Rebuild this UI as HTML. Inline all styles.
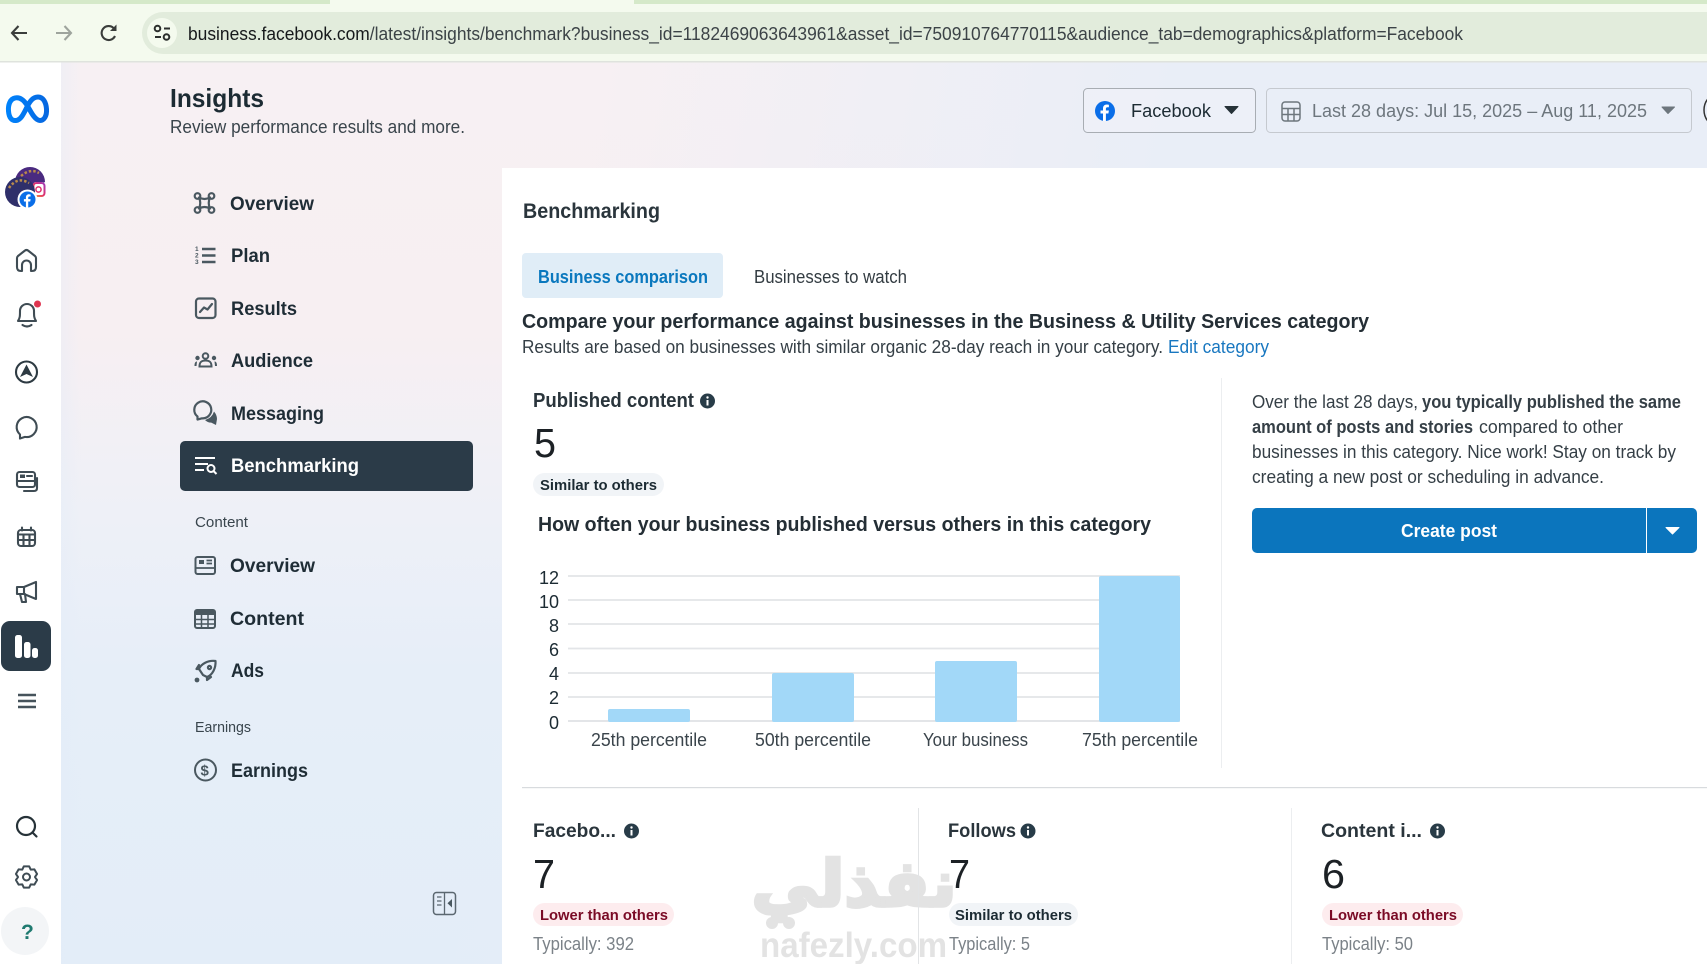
<!DOCTYPE html>
<html lang="en">
<head>
<meta charset="utf-8">
<title>Insights - Benchmarking</title>
<style>
html,body{margin:0;padding:0;width:1707px;height:964px;overflow:hidden;background:#fff}
#bg{position:absolute;left:61px;top:62px;width:1646px;height:902px;
background:
 linear-gradient(90deg,rgba(226,236,248,.35) 0,rgba(226,236,248,0) 20px),
 linear-gradient(100deg,rgba(233,238,247,0) 30%,rgba(233,238,247,1) 62%),
 linear-gradient(180deg,#f7f0f3 0,#f7eff2 30%,#eef0f7 50%,#e6eef8 68%,#e3edf8 100%)}
svg{position:absolute;left:0;top:0}
text{font-family:"Liberation Sans",sans-serif;fill:#1c2b33}
.b{font-weight:700}
.nav{font-weight:700;font-size:19px;fill:#1f2d36}
.lab{font-size:15px;fill:#39454d}
.i{fill:none;stroke:#4a5860;stroke-width:2.2;stroke-linecap:round;stroke-linejoin:round}
.s{fill:none;stroke:#3f4c54;stroke-width:2.1;stroke-linecap:round;stroke-linejoin:round}
.ax{font-size:18px;fill:#3a444b}
.pill{font-weight:700;font-size:15px}
.typ{font-size:18px;fill:#7b8288}
.num{font-size:41px;fill:#1c2125}
.body{font-size:18px;fill:#353f46}
</style>
</head>
<body>
<div id="bg"></div>
<svg width="1707" height="964" viewBox="0 0 1707 964" xmlns="http://www.w3.org/2000/svg">
<defs>
<linearGradient id="meta" x1="0" x2="1" y1="0" y2="0"><stop offset="0" stop-color="#0082fb"/><stop offset="1" stop-color="#0668e1"/></linearGradient>
<linearGradient id="ig" x1="0" x2="1" y1="1" y2="0"><stop offset="0" stop-color="#f9a03c"/><stop offset=".5" stop-color="#e1306c"/><stop offset="1" stop-color="#a13ab8"/></linearGradient>
</defs>

<!-- browser chrome -->
<rect x="0" y="0" width="1707" height="62" fill="#f4faee"/>
<rect x="0" y="0" width="330" height="4" fill="#d5e9c9"/>
<rect x="634" y="0" width="1073" height="4" fill="#d5e9c9"/>
<rect x="0" y="61" width="1707" height="1.5" fill="#dfe3dd"/>
<path d="M1707 12H163a21 21 0 0 0 0 42H1707Z" fill="#e2ecdc"/>
<circle cx="162" cy="33" r="15" fill="#f4faee"/>
<g fill="none" stroke="#2c2f2d" stroke-width="2">
<circle cx="157.500" cy="28.500" r="2.800"/><path d="M164 28.500H170"/><circle cx="166.500" cy="37" r="2.800"/><path d="M155 37H161"/>
</g>
<path d="M27 33H12M18.500 26L12 33L18.500 40" fill="none" stroke="#3a3d3b" stroke-width="2.100"/>
<path d="M56 33H71M64.500 26L71 33L64.500 40" fill="none" stroke="#9ea49d" stroke-width="2.100"/>
<path d="M115 36A7 7 0 1 1 113.500 28" fill="none" stroke="#3a3d3b" stroke-width="2.100"/>
<path d="M116.500 24.500V31H110Z" fill="#3a3d3b"/>
<text x="188" y="40" font-size="18.500" textLength="1275" lengthAdjust="spacingAndGlyphs" style="fill:#22282b"><tspan style="fill:#16191b">business.facebook.com</tspan><tspan style="fill:#3c4347">/latest/insights/benchmark?business_id=1182469063643961&amp;asset_id=750910764770115&amp;audience_tab=demographics&amp;platform=Facebook</tspan></text>

<!-- left rail -->
<path d="M27 105C23 99 19 97 15 98C10 99 8 105 8.500 111C9 118 12 121 16 120.500C21 120 24 113 27 107C30 101 33 97 38 97C43 97 46 102 46.500 109C47 116 44 120.500 40 120.500C35 120.500 31 112 27 105Z" fill="none" stroke="url(#meta)" stroke-width="5" stroke-linejoin="round"/>
<path d="M15 182A15 15 0 0 1 45 182L30 190Z" fill="#4a2a80"/>
<path d="M21 176Q30 168 39 173" fill="none" stroke="#b98a4a" stroke-width="2.500" stroke-dasharray="2.500 2"/>
<rect x="33" y="182" width="12" height="15" rx="3" fill="#fff"/>
<rect x="33.500" y="183" width="11" height="13" rx="3" fill="none" stroke="url(#ig)" stroke-width="2"/>
<circle cx="38.500" cy="189.500" r="2.600" fill="none" stroke="#e1306c" stroke-width="1.500"/>
<circle cx="20" cy="192" r="15" fill="#2f2f6a"/>
<path d="M9 188Q17 176 29 183" fill="none" stroke="#b98a4a" stroke-width="2.500" stroke-dasharray="2.500 2"/>
<circle cx="27.500" cy="199.500" r="10" fill="#fff"/>
<circle cx="27.500" cy="199.500" r="8" fill="#0a6ee8"/>
<path transform="translate(27.500 199.500) scale(.8)" d="M-2 10V2.500H-4.500V-.5H-2V-2.500C-2-5.100-.5-6.500 1.900-6.500L3.900-6.300V-3.700H2.500C1.300-3.700.9-3 .9-2.200V-.5H3.900L3.400 2.500H.9V10Z" fill="#fff"/>

<g class="s">
<path d="M17 258Q17 257 18 256L25 250.500Q26.500 249.500 28 250.500L35 256Q36 257 36 258V267Q36 271 32 271H31V265A4.500 4.500 0 0 0 22 265V271H21Q17 271 17 267Z"/>
<path d="M18 321C20 318 20 316 20 311A7 7 0 0 1 34 311C34 316 34 318 36 321Z"/><path d="M22.500 325Q27 328 31.500 325"/>
</g>
<circle cx="37.500" cy="304" r="3.500" fill="#df3550"/>
<circle cx="26.500" cy="372" r="10.500" fill="none" stroke="#2d3a42" stroke-width="2.100"/>
<path d="M26.500 364.500L33 377L26.500 374L20 377Z" fill="#2d3a42"/>
<path class="s" d="M20 434.500A10 10 0 1 1 25 436.900L20 438.500Z"/>
<g class="s">
<rect x="17" y="472" width="18" height="15" rx="2.500"/>
<path d="M37 478V488Q37 491 34 491H24"/>
<path d="M17 481H35"/><path d="M27 476H32"/>
</g>
<rect x="20" y="474.500" width="5" height="3.500" fill="#3f4c54"/>
<g class="s">
<rect x="18" y="530" width="17" height="16" rx="3"/><path d="M22 527.500V530.500M31 527.500V530.500M18 534.500H35M18 540H35M23.500 534.500V546M29.500 534.500V546"/>
</g>
<g class="s">
<path d="M17 587H24L36 582V599L24 594H17Z"/><path d="M20 594L22 602H26L25 594"/><path d="M24 587V594"/>
</g>
<rect x="1" y="621" width="50" height="50" rx="9" fill="#2b3b48"/>
<rect x="15" y="635" width="7" height="23" rx="2.500" fill="#fff"/>
<rect x="24" y="642" width="6.500" height="16" rx="2.500" fill="#fff"/>
<rect x="32" y="648" width="6" height="10" rx="2.500" fill="#fff"/>
<path d="M18 695H36M18 701H36M18 707H36" fill="none" stroke="#46535b" stroke-width="2.400"/>
<circle cx="26" cy="826" r="9" fill="none" stroke="#263238" stroke-width="2.200"/>
<path d="M32.500 832.500L36.500 836.500" stroke="#263238" stroke-width="2.200" stroke-linecap="round"/>
<circle cx="26.500" cy="877" r="3.500" fill="none" stroke="#3f4c54" stroke-width="2"/>
<path transform="translate(26.500 877)" d="M-2.660-10.670L2.660-10.670L4.250-7.360L7.900-7.640L10.570-3.030L8.500 0L10.570 3.030L7.900 7.640L4.250 7.360L2.660 10.670L-2.660 10.670L-4.250 7.360L-7.900 7.640L-10.570 3.030L-8.500 0L-10.570-3.030L-7.900-7.640L-4.250-7.360Z" fill="none" stroke="#3f4c54" stroke-width="2" stroke-linejoin="round"/>
<circle cx="25" cy="931" r="24" fill="#f3f5f7"/>
<text x="21" y="939" font-size="21" class="b" style="fill:#1f7a70">?</text>

<!-- header -->
<text x="170" y="107" font-size="26" class="b" textLength="94" lengthAdjust="spacingAndGlyphs">Insights</text>
<text x="170" y="133" font-size="18.500" textLength="295" lengthAdjust="spacingAndGlyphs" style="fill:#3a454c">Review performance results and more.</text>

<!-- sidebar nav -->
<rect x="180" y="441" width="293" height="50" rx="5" fill="#2b3b48"/>
<text class="nav" x="230" y="210" textLength="84" lengthAdjust="spacingAndGlyphs">Overview</text>
<text class="nav" x="231" y="262" textLength="39" lengthAdjust="spacingAndGlyphs">Plan</text>
<text class="nav" x="231" y="315" textLength="66" lengthAdjust="spacingAndGlyphs">Results</text>
<text class="nav" x="231" y="367" textLength="82" lengthAdjust="spacingAndGlyphs">Audience</text>
<text class="nav" x="231" y="420" textLength="93" lengthAdjust="spacingAndGlyphs">Messaging</text>
<text class="nav" x="231" y="472" textLength="128" lengthAdjust="spacingAndGlyphs" style="fill:#fff">Benchmarking</text>
<text class="lab" x="195" y="527" textLength="53" lengthAdjust="spacingAndGlyphs">Content</text>
<text class="nav" x="230" y="572" textLength="85" lengthAdjust="spacingAndGlyphs">Overview</text>
<text class="nav" x="230" y="625" textLength="74" lengthAdjust="spacingAndGlyphs">Content</text>
<text class="nav" x="231" y="677" textLength="33" lengthAdjust="spacingAndGlyphs">Ads</text>
<text class="lab" x="195" y="732" textLength="56" lengthAdjust="spacingAndGlyphs">Earnings</text>
<text class="nav" x="231" y="777" textLength="77" lengthAdjust="spacingAndGlyphs">Earnings</text>

<!-- nav icons -->
<g class="i">
<path d="M199 197.500Q204.500 200.500 210 197.500Q207.500 203 210 208.500Q204.500 205.500 199 208.500Q201.500 203 199 197.500Z"/>
<circle cx="197.500" cy="196" r="2.800"/><circle cx="211.500" cy="196" r="2.800"/><circle cx="197.500" cy="210" r="2.800"/><circle cx="211.500" cy="210" r="2.800"/>
</g>
<g>
<path d="M202 249H215.500M202 255.500H215.500M202 262H215.500" fill="none" stroke="#4a5860" stroke-width="2.600"/>
<text x="195" y="251" font-size="6.500" class="b" style="fill:#4a5860">1</text>
<text x="195" y="257.500" font-size="6.500" class="b" style="fill:#4a5860">2</text>
<text x="195" y="264" font-size="6.500" class="b" style="fill:#4a5860">3</text>
</g>
<g class="i">
<rect x="196" y="298.500" width="19.500" height="19.500" rx="3"/>
<path d="M200 312L204 307.500L207.500 309.500L212 304"/>
</g>
<g fill="#4a5860">
<circle cx="205.500" cy="356" r="2.800" fill="none" stroke="#4a5860" stroke-width="2"/>
<path d="M199.500 366.500C199.500 362 201.500 360.500 205.500 360.500C209.500 360.500 211.500 362 211.500 366.500Z" fill="none" stroke="#4a5860" stroke-width="2"/>
<circle cx="197.500" cy="358" r="2.200"/><circle cx="214" cy="358" r="2.200"/>
<path d="M194.500 366C194.500 362.500 195.500 361.500 197 361.500L196.500 366ZM217 366C217 362.500 216 361.500 214.500 361.500L215 366Z"/>
</g>
<path d="M197.500 416.500A8.500 8.500 0 1 1 202 418.300L197.500 419.500Z" fill="none" stroke="#4a5860" stroke-width="2.200" stroke-linejoin="round"/>
<path d="M205 420Q212 418 214 411.500Q217 415 217 419L216 425L211 422.500Q208 423 205 420Z" fill="#4a5860"/>
<path d="M195 458H215M195 464H208M195 470H204" fill="none" stroke="#fff" stroke-width="2"/>
<circle cx="211" cy="468.500" r="3.500" fill="none" stroke="#fff" stroke-width="2"/>
<path d="M213.500 471L216.500 474" stroke="#fff" stroke-width="2"/>
<rect x="195.500" y="557" width="19.500" height="17" rx="2" fill="none" stroke="#4a5860" stroke-width="2"/>
<rect x="199" y="560" width="5" height="4" fill="#4a5860"/>
<path d="M206.500 560.500H212M206.500 563.500H212M196 568H215" fill="none" stroke="#4a5860" stroke-width="1.800"/>
<rect x="195" y="610" width="20" height="18" rx="2" fill="none" stroke="#4a5860" stroke-width="2"/>
<rect x="195" y="610" width="20" height="5" fill="#4a5860"/>
<path d="M195 619.500H215M195 624H215M201.500 615V628M208 615V628" fill="none" stroke="#4a5860" stroke-width="1.500"/>
<g class="i">
<path d="M203 675L199 669C201 664 208 660 215.500 661C216 668 212.500 675 207 677Z"/>
<path d="M199 669H196.500L199 665M207 677V680L211 677"/>
<circle cx="209.500" cy="667.500" r="1.600"/>
</g>
<circle cx="197" cy="680" r="2.400" fill="#4a5860"/>
<circle cx="205.500" cy="770" r="10.500" fill="none" stroke="#4a5860" stroke-width="2"/>
<text x="200.500" y="775.500" font-size="15" class="b" style="fill:#4a5860">$</text>

<!-- collapse -->
<rect x="433.500" y="892.500" width="22" height="22" rx="3" fill="none" stroke="#5b6770" stroke-width="1.500"/>
<path d="M444.500 892.500V914.500M437 897H441.500M437 901H441.500M437 905H441.500" fill="none" stroke="#5b6770" stroke-width="1.300"/>
<path d="M452 899V907.500L447.500 903.200Z" fill="#4a5860"/>

<!-- top selectors -->
<rect x="1083.500" y="88.500" width="172" height="44" rx="4" fill="#f0f2f8" fill-opacity=".6" stroke="#a8adb3"/>
<circle cx="1105" cy="111" r="10" fill="#0a6ee8"/>
<path transform="translate(1105 111)" d="M-2 10V2.500H-4.500V-.5H-2V-2.500C-2-5.100-.5-6.500 1.900-6.500L3.900-6.300V-3.700H2.500C1.300-3.700.9-3 .9-2.200V-.5H3.900L3.400 2.500H.9V10Z" fill="#fff"/>
<text x="1131" y="117" font-size="18.500" textLength="80" lengthAdjust="spacingAndGlyphs" style="fill:#1c2b33">Facebook</text>
<path d="M1225 106.500H1238L1231.500 113.500Z" fill="#263238" stroke="#263238" stroke-linejoin="round"/>
<rect x="1266.500" y="88.500" width="425" height="44" rx="4" fill="none" stroke="#c5c9cf"/>
<g fill="none" stroke="#6d767d" stroke-width="1.500">
<rect x="1282" y="102" width="18" height="19" rx="3"/><path d="M1282 108.500H1300M1282 114.500H1300M1288 108.500V121M1294 108.500V121"/>
</g>
<text x="1312" y="117" font-size="18.500" textLength="335" lengthAdjust="spacingAndGlyphs" style="fill:#6d767d">Last 28 days: Jul 15, 2025 – Aug 11, 2025</text>
<path d="M1662 107H1674.500L1668 113.500Z" fill="#6d767d" stroke="#6d767d" stroke-linejoin="round"/>
<circle cx="1722" cy="110" r="18" fill="none" stroke="#333" stroke-width="1.500"/>

<!-- main panel -->
<rect x="502" y="168" width="1205" height="796" fill="#fff"/>
<text x="523" y="218" font-size="21" class="b" textLength="137" lengthAdjust="spacingAndGlyphs" style="fill:#2a353c">Benchmarking</text>
<rect x="522" y="253" width="201" height="45" rx="4" fill="#e0edf7"/>
<text x="538" y="283" font-size="18.500" class="b" textLength="170" lengthAdjust="spacingAndGlyphs" style="fill:#0a78be">Business comparison</text>
<text x="754" y="283" font-size="18" textLength="153" lengthAdjust="spacingAndGlyphs" style="fill:#333c42">Businesses to watch</text>
<text x="522" y="328" font-size="20" class="b" textLength="847" lengthAdjust="spacingAndGlyphs" style="fill:#242e35">Compare your performance against businesses in the Business &amp; Utility Services category</text>
<text class="body" x="522" y="353" textLength="641" lengthAdjust="spacingAndGlyphs">Results are based on businesses with similar organic 28-day reach in your category.</text>
<text class="body" x="1168" y="353" textLength="101" lengthAdjust="spacingAndGlyphs" style="fill:#1877c0">Edit category</text>

<text x="533" y="407" font-size="20" class="b" textLength="161" lengthAdjust="spacingAndGlyphs" style="fill:#2a353c">Published content</text>
<circle cx="707.500" cy="401" r="7.500" fill="#283c48"/>
<rect x="706.500" y="400" width="2" height="5.500" fill="#fff"/><circle cx="707.500" cy="397.500" r="1.200" fill="#fff"/>
<text class="num" x="534" y="457" textLength="22" lengthAdjust="spacingAndGlyphs">5</text>
<rect x="533" y="473" width="131" height="23" rx="11.500" fill="#f1f4f7"/>
<text class="pill" x="540" y="490" textLength="117" lengthAdjust="spacingAndGlyphs">Similar to others</text>
<text x="538" y="531" font-size="20" class="b" textLength="613" lengthAdjust="spacingAndGlyphs" style="fill:#242e35">How often your business published versus others in this category</text>

<!-- chart -->
<g stroke="#e3e5e8" stroke-width="1.800">
<path d="M568 576H1180M568 600H1180M568 624H1180M568 648.500H1180M568 673H1180M568 697H1180"/>
<path d="M568 721H1180" stroke-width="2"/>
</g>
<g fill="#a2d8f8">
<rect x="608" y="709" width="82" height="13" rx="2"/>
<rect x="772" y="673" width="82" height="49" rx="2"/>
<rect x="935" y="661" width="82" height="61" rx="2"/>
<rect x="1099" y="576" width="81" height="146" rx="2"/>
</g>
<g class="ax" text-anchor="end">
<text x="559" y="584">12</text><text x="559" y="608">10</text><text x="559" y="632">8</text><text x="559" y="656">6</text><text x="559" y="680">4</text><text x="559" y="704">2</text><text x="559" y="729">0</text>
</g>
<text class="ax" x="591" y="746" textLength="116" lengthAdjust="spacingAndGlyphs">25th percentile</text>
<text class="ax" x="755" y="746" textLength="116" lengthAdjust="spacingAndGlyphs">50th percentile</text>
<text class="ax" x="923" y="746" textLength="105" lengthAdjust="spacingAndGlyphs">Your business</text>
<text class="ax" x="1082" y="746" textLength="116" lengthAdjust="spacingAndGlyphs">75th percentile</text>

<rect x="1221" y="378" width="1" height="390" fill="#eceef0"/>

<!-- right summary -->
<text class="body" x="1252" y="408" textLength="166" lengthAdjust="spacingAndGlyphs">Over the last 28 days,</text>
<text class="body b" x="1422" y="408" textLength="259" lengthAdjust="spacingAndGlyphs">you typically published the same</text>
<text class="body b" x="1252" y="433" textLength="221" lengthAdjust="spacingAndGlyphs">amount of posts and stories</text>
<text class="body" x="1479" y="433" textLength="144" lengthAdjust="spacingAndGlyphs">compared to other</text>
<text class="body" x="1252" y="458" textLength="424" lengthAdjust="spacingAndGlyphs">businesses in this category. Nice work! Stay on track by</text>
<text class="body" x="1252" y="483" textLength="352" lengthAdjust="spacingAndGlyphs">creating a new post or scheduling in advance.</text>
<rect x="1252" y="508" width="445" height="45" rx="5" fill="#0b75bd"/>
<rect x="1646" y="508" width="1" height="45" fill="#fff"/>
<text x="1401" y="537" font-size="18.500" class="b" textLength="96" lengthAdjust="spacingAndGlyphs" style="fill:#fff">Create post</text>
<path d="M1666 527.500H1679L1672.500 534Z" fill="#fff" stroke="#fff" stroke-linejoin="round"/>

<!-- watermark -->
<text x="854" y="906" font-size="64" font-weight="700" text-anchor="middle" direction="rtl" textLength="205" lengthAdjust="spacingAndGlyphs" stroke="#e3e3e3" stroke-width="3.500" style="font-family:'DejaVu Sans',sans-serif;fill:#e3e3e3">نفذلي</text>
<circle cx="772" cy="923" r="6" fill="#e3e3e3"/><circle cx="789" cy="923" r="6" fill="#e3e3e3"/>
<text x="760" y="957" font-size="35" class="b" textLength="187" lengthAdjust="spacingAndGlyphs" style="fill:#e3e3e3">nafezly.com</text>

<rect x="522" y="787" width="1185" height="1.200" fill="#d8dbde"/>
<rect x="918" y="808" width="1" height="156" fill="#e2e4e6"/>
<rect x="1291" y="808" width="1" height="156" fill="#eceef0"/>

<!-- metrics -->
<text x="533" y="837" font-size="19.500" class="b" textLength="83" lengthAdjust="spacingAndGlyphs" style="fill:#2a353c">Facebo...</text>
<text x="948" y="837" font-size="19.500" class="b" textLength="68" lengthAdjust="spacingAndGlyphs" style="fill:#2a353c">Follows</text>
<text x="1321" y="837" font-size="19.500" class="b" textLength="101" lengthAdjust="spacingAndGlyphs" style="fill:#2a353c">Content i...</text>
<g fill="#283c48">
<circle cx="631.500" cy="831" r="7.500"/><circle cx="1028" cy="831" r="7.500"/><circle cx="1437.500" cy="831" r="7.500"/>
</g>
<g fill="#fff">
<rect x="630.500" y="830" width="2" height="5.500"/><circle cx="631.500" cy="827.500" r="1.200"/>
<rect x="1027" y="830" width="2" height="5.500"/><circle cx="1028" cy="827.500" r="1.200"/>
<rect x="1436.500" y="830" width="2" height="5.500"/><circle cx="1437.500" cy="827.500" r="1.200"/>
</g>

<text class="num" x="533" y="888" textLength="22" lengthAdjust="spacingAndGlyphs">7</text>
<text class="num" x="949" y="888" textLength="21" lengthAdjust="spacingAndGlyphs">7</text>
<text class="num" x="1322" y="888" textLength="23" lengthAdjust="spacingAndGlyphs">6</text>

<rect x="533" y="903" width="141" height="23" rx="11.500" fill="#fdecee"/>
<text class="pill" x="540" y="920" textLength="128" lengthAdjust="spacingAndGlyphs" style="fill:#7a0a25">Lower than others</text>
<rect x="949" y="903" width="129" height="23" rx="11.500" fill="#f1f4f7"/>
<text class="pill" x="955" y="920" textLength="117" lengthAdjust="spacingAndGlyphs">Similar to others</text>
<rect x="1322" y="903" width="141" height="23" rx="11.500" fill="#fdecee"/>
<text class="pill" x="1329" y="920" textLength="128" lengthAdjust="spacingAndGlyphs" style="fill:#7a0a25">Lower than others</text>

<text class="typ" x="533" y="950" textLength="101" lengthAdjust="spacingAndGlyphs">Typically: 392</text>
<text class="typ" x="949" y="950" textLength="81" lengthAdjust="spacingAndGlyphs">Typically: 5</text>
<text class="typ" x="1322" y="950" textLength="91" lengthAdjust="spacingAndGlyphs">Typically: 50</text>
</svg>
</body>
</html>
